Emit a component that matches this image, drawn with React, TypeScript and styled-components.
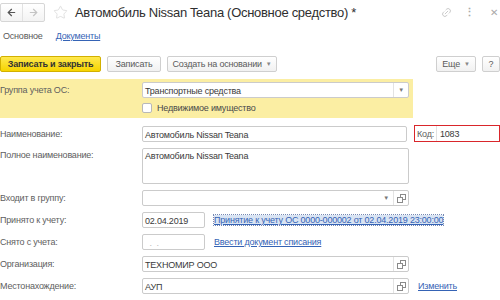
import React from "react";
import styled, { createGlobalStyle } from "styled-components";
import { ArrowLeft, ArrowRight, Star, Link2 } from "lucide-react";

const font = `"Liberation Sans", Arial, sans-serif`;

const GlobalStyle = createGlobalStyle`
  html, body { margin: 0; padding: 0; background: #fff; }
  body {
    font-family: ${font};
    font-size: 9px;
    letter-spacing: -0.2px;
    color: #333;
    overflow: hidden;
  }
`;

const Page = styled.div`
  width: 500px;
  height: 300px;
  overflow: hidden;
`;

// ---- header
const Header = styled.div`
  display: flex;
  align-items: center;
  height: 19px;
  margin-top: 3px;
`;

const NavGroup = styled.div`
  display: flex;
  height: 19px;
  box-sizing: border-box;
  border: 1px solid #d6d6d6;
  border-radius: 2px;
  background: linear-gradient(#fff, #f3f3f3);
`;

const NavBtn = styled.div<{ $muted?: boolean; $split?: boolean }>`
  width: 21px;
  display: flex;
  align-items: center;
  justify-content: center;
  color: ${(p) => (p.$muted ? "#c4c4c4" : "#555")};
  border-right: ${(p) => (p.$split ? "1px solid #e2e2e2" : "none")};
`;

const StarIcon = styled.div`
  margin-left: 8px;
  display: flex;
  color: #cfcfcf;
`;

const Title = styled.div`
  margin-left: 7px;
  font-size: 13px;
  letter-spacing: -0.3px;
  color: #2f2f2f;
  white-space: nowrap;
`;

const HeaderTools = styled.div`
  margin-left: auto;
  display: flex;
  align-items: center;
  color: #b5b5b5;
`;

const Dots = styled.span`
  margin-left: 12px;
  font-size: 11px;
  font-weight: bold;
  color: #aaa;
`;

const Close = styled.span`
  margin-left: 15px;
  margin-right: 2px;
  font-size: 10px;
  color: #aaa;
`;

// ---- tabs
const Tabs = styled.div`
  display: flex;
  align-items: center;
  height: 14px;
  margin-top: 7px;
`;

const Tab = styled.span<{ $link?: boolean }>`
  margin-left: ${(p) => (p.$link ? "13px" : "3px")};
  color: ${(p) => (p.$link ? "#3563b5" : "#5a5a5a")};
  text-decoration: ${(p) => (p.$link ? "underline" : "none")};
`;

// ---- toolbar
const Toolbar = styled.div`
  display: flex;
  align-items: center;
  gap: 6px;
  margin-top: 13px;
  height: 16px;
`;

const Button = styled.div<{ $w: number; $primary?: boolean }>`
  width: ${(p) => p.$w}px;
  height: 16px;
  box-sizing: border-box;
  display: flex;
  align-items: center;
  justify-content: center;
  gap: 4px;
  border-radius: 2px;
  border: 1px solid ${(p) => (p.$primary ? "#d2b000" : "#cfcfcf")};
  background: ${(p) =>
    p.$primary ? "linear-gradient(#ffe94f, #f6d400)" : "linear-gradient(#fff, #f1f1f1)"};
  color: ${(p) => (p.$primary ? "#333" : "#5a5a5a")};
  font-weight: ${(p) => (p.$primary ? "bold" : "normal")};
  white-space: nowrap;
`;

const Caret = styled.span`
  font-size: 6px;
  color: #888;
`;

const Spacer = styled.div`
  flex: 1;
`;

// ---- form
const GroupPanel = styled.div`
  width: 413px;
  height: 39px;
  box-sizing: border-box;
  margin-top: 7px;
  padding-top: 3px;
  background: #fbeea3;
`;

const Form = styled.div`
  display: flex;
  flex-direction: column;
  gap: 6px;
  margin-top: 7px;
`;

const Row = styled.div<{ $top?: boolean }>`
  display: flex;
  align-items: ${(p) => (p.$top ? "flex-start" : "center")};
`;

const Label = styled.div<{ $top?: boolean }>`
  width: 142px;
  flex-shrink: 0;
  color: #5e5e5e;
  white-space: nowrap;
  padding-top: ${(p) => (p.$top ? "2px" : "0")};
`;

const Field = styled.div<{ $w: number; $h?: number; $top?: boolean }>`
  width: ${(p) => p.$w}px;
  height: ${(p) => p.$h ?? 16}px;
  box-sizing: border-box;
  display: flex;
  align-items: ${(p) => (p.$top ? "flex-start" : "center")};
  border: 1px solid #cbcbcb;
  border-radius: 2px;
  background: #fff;
  color: #333;
  white-space: nowrap;
  overflow: hidden;
`;

const FieldText = styled.span<{ $muted?: boolean }>`
  flex: 1;
  padding: 2px 2px 0;
  color: ${(p) => (p.$muted ? "#b8b8b8" : "#3a3a3a")};
`;

const FieldBtn = styled.div<{ $split?: boolean }>`
  width: 14px;
  height: 100%;
  display: flex;
  align-items: center;
  justify-content: center;
  color: #777;
  font-size: 6px;
  border-left: ${(p) => (p.$split ? "1px solid #e3e3e3" : "none")};
`;

const CheckRow = styled.div`
  display: flex;
  align-items: center;
  margin-top: 5px;
  margin-left: 142px;
`;

const CheckBox = styled.div`
  width: 10px;
  height: 10px;
  box-sizing: border-box;
  border: 1px solid #b8b8b8;
  border-radius: 2px;
  background: #fff;
`;

const CheckLabel = styled.span`
  margin-left: 5px;
  color: #4a4a4a;
`;

const CodeBox = styled.div`
  margin-left: 7px;
  width: 86px;
  height: 17px;
  box-sizing: border-box;
  display: flex;
  align-items: stretch;
  border: 1px solid #d9262b;
`;

const CodeLabel = styled.span`
  width: 19px;
  padding-left: 2px;
  display: flex;
  align-items: center;
  color: #5e5e5e;
  border-right: 1px solid #e2e2e2;
`;

const CodeValue = styled.span`
  padding-left: 3px;
  display: flex;
  align-items: center;
  color: #3a3a3a;
`;

const Link = styled.span<{ $focused?: boolean; $gap?: number }>`
  margin-left: ${(p) => p.$gap ?? 9}px;
  color: #3563b5;
  text-decoration: underline;
  white-space: nowrap;
  background: ${(p) => (p.$focused ? "#d9e4f3" : "transparent")};
  outline: ${(p) => (p.$focused ? "1px dotted #7588b3" : "none")};
`;

const OpenIcon = () => (
  <svg width="9" height="9" viewBox="0 0 9 9">
    <rect x="3.5" y="0.5" width="5" height="5" fill="#fff" stroke="#8a8a8a" />
    <rect x="0.5" y="3.5" width="5" height="5" fill="#fff" stroke="#8a8a8a" />
  </svg>
);

const App = () => {
  return (
    <Page>
      <GlobalStyle />
      <Header>
        <NavGroup>
          <NavBtn $split>
            <ArrowLeft size={11} strokeWidth={2.6} />
          </NavBtn>
          <NavBtn $muted>
            <ArrowRight size={11} strokeWidth={2.6} />
          </NavBtn>
        </NavGroup>
        <StarIcon>
          <Star size={15} strokeWidth={1} />
        </StarIcon>
        <Title>Автомобиль Nissan Teana (Основное средство) *</Title>
        <HeaderTools>
          <Link2 size={11} strokeWidth={1.5} style={{ transform: "rotate(-45deg)" }} />
          <Dots>⋮</Dots>
          <Close>✕</Close>
        </HeaderTools>
      </Header>

      <Tabs>
        <Tab>Основное</Tab>
        <Tab $link>Документы</Tab>
      </Tabs>

      <Toolbar>
        <Button $w={101} $primary>Записать и закрыть</Button>
        <Button $w={54}>Записать</Button>
        <Button $w={110}>
          Создать на основании <Caret>▼</Caret>
        </Button>
        <Spacer />
        <Button $w={40}>
          Еще <Caret>▼</Caret>
        </Button>
        <Button $w={18}>?</Button>
      </Toolbar>

      <GroupPanel>
        <Row>
          <Label>Группа учета ОС:</Label>
          <Field $w={267}>
            <FieldText>Транспортные средства</FieldText>
            <FieldBtn $split>▼</FieldBtn>
          </Field>
        </Row>
        <CheckRow>
          <CheckBox />
          <CheckLabel>Недвижимое имущество</CheckLabel>
        </CheckRow>
      </GroupPanel>

      <Form>
        <Row>
          <Label>Наименование:</Label>
          <Field $w={265}>
            <FieldText>Автомобиль Nissan Teana</FieldText>
          </Field>
          <CodeBox>
            <CodeLabel>Код:</CodeLabel>
            <CodeValue>1083</CodeValue>
          </CodeBox>
        </Row>
        <Row $top>
          <Label $top>Полное наименование:</Label>
          <Field $w={267} $h={36} $top>
            <FieldText>Автомобиль Nissan Teana</FieldText>
          </Field>
        </Row>
        <Row>
          <Label>Входит в группу:</Label>
          <Field $w={267}>
            <FieldText />
            <FieldBtn>▼</FieldBtn>
            <FieldBtn $split>
              <OpenIcon />
            </FieldBtn>
          </Field>
        </Row>
        <Row>
          <Label>Принято к учету:</Label>
          <Field $w={63}>
            <FieldText>02.04.2019</FieldText>
          </Field>
          <Link $focused>Принятие к учету ОС 0000-000002 от 02.04.2019 23:00:00</Link>
        </Row>
        <Row>
          <Label>Снято с учета:</Label>
          <Field $w={63}>
            <FieldText $muted>&nbsp;&nbsp;.&nbsp;&nbsp;.</FieldText>
          </Field>
          <Link>Ввести документ списания</Link>
        </Row>
        <Row>
          <Label>Организация:</Label>
          <Field $w={267}>
            <FieldText>ТЕХНОМИР ООО</FieldText>
            <FieldBtn $split>
              <OpenIcon />
            </FieldBtn>
          </Field>
        </Row>
        <Row>
          <Label>Местонахождение:</Label>
          <Field $w={267}>
            <FieldText>АУП</FieldText>
            <FieldBtn $split>
              <OpenIcon />
            </FieldBtn>
          </Field>
          <Link $gap={9}>Изменить</Link>
        </Row>
      </Form>
    </Page>
  );
};

export default App;
